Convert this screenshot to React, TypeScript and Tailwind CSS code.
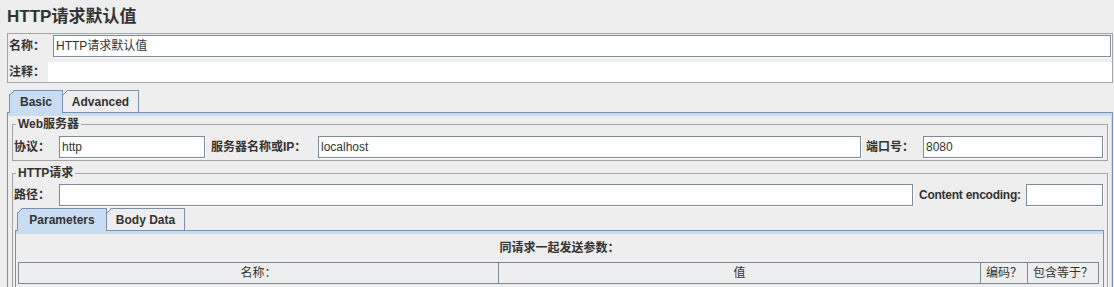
import type { ReactNode } from "react";

const FONT = "font-['Liberation_Sans','Noto_Sans_CJK_SC',sans-serif]";

function Field({ value, className = "" }: { value?: string; className?: string }) {
  return (
    <div
      className={`flex h-[22px] items-center border border-[#7a8a99] bg-white px-[2px] text-[12px] text-[#333] shadow-[1px_1px_0_#ffffff] ${className}`}
    >
      {value}
    </div>
  );
}

function Label({ children, className = "" }: { children: ReactNode; className?: string }) {
  return <div className={`shrink-0 whitespace-nowrap text-[12px] font-bold ${className}`}>{children}</div>;
}

// metal-style tab, clipped top-left corner with a drawn diagonal
function Tab({ label, selected, className = "" }: { label: string; selected?: boolean; className?: string }) {
  return (
    <div
      className={`relative flex h-[22px] items-center justify-center border-l border-t border-r border-[#7a8fb8] text-[12px] font-bold [clip-path:polygon(5px_0,100%_0,100%_100%,0_100%,0_5px)] ${
        selected ? "z-10 -mb-px h-[23px] bg-[#c8ddf2]" : "bg-[#eeeeee]"
      } ${className}`}
    >
      <svg className="absolute -left-px -top-px h-[6px] w-[6px]" viewBox="0 0 6 6">
        <line x1="0.5" y1="5.5" x2="5.5" y2="0.5" stroke="#7a8fb8" strokeWidth="1" />
      </svg>
      {label}
    </div>
  );
}

function Group({ title, children, className = "" }: { title: string; children: ReactNode; className?: string }) {
  return (
    <fieldset className={`mx-[4px] border border-[#a5a5a5] ${className}`}>
      <legend className="ml-[3px] px-[2px] text-[12px] font-bold leading-[14px]">{title}</legend>
      {children}
    </fieldset>
  );
}

export default function App() {
  return (
    <div className={`h-[287px] w-[1114px] overflow-hidden bg-[#eeeeee] text-[#333] ${FONT}`}>
      <div className="h-[33px] pl-[7px] pt-[7px] text-[17px] font-bold leading-[20px]">HTTP请求默认值</div>

      <div className="ml-[7px] h-[50px] w-[1106px] border border-[#a5a5a5]">
        <div className="mt-[1px] flex h-[22px] items-center">
          <Label className="w-[45px] pl-[1px]">名称：</Label>
          <Field value="HTTP请求默认值" className="mr-[1px] flex-1" />
        </div>
        <div className="mt-[5px] flex h-[20px] items-center">
          <Label className="w-[40px] pl-[1px]">注释：</Label>
          <div className="h-[20px] flex-1 bg-white" />
        </div>
      </div>

      <div className="mt-[7px] flex items-end pl-[9px]">
        <Tab label="Basic" selected className="w-[54px]" />
        <Tab label="Advanced" className="-ml-px w-[77px]" />
      </div>

      <div className="ml-[7px] h-[200px] w-[1106px] border border-[#7a8fb8] shadow-[inset_-1px_0_0_#c8ddf2]">
        <div className="h-[3px] bg-[#c8ddf2]" />

        <Group title="Web服务器" className="mt-[1px]">
          <div className="mb-[2px] mt-[5px] flex h-[22px] items-center">
            <Label className="w-[46px] pl-[1px]">协议：</Label>
            <Field value="http" className="w-[146px]" />
            <Label className="w-[113px] pl-[6px]">服务器名称或IP：</Label>
            <Field value="localhost" className="w-[543px]" />
            <Label className="w-[62px] pl-[5px]">端口号：</Label>
            <Field value="8080" className="w-[180px]" />
          </div>
        </Group>

        <Group title="HTTP请求" className="mt-[5px] h-[140px]">
          <div className="mt-[4px] flex h-[22px] items-center">
            <Label className="w-[46px] pl-[1px]">路径：</Label>
            <Field className="w-[854px]" />
            <Label className="w-[113px] pl-[6px] tracking-[-0.25px]">Content encoding:</Label>
            <Field className="w-[77px]" />
          </div>

          <div className="mt-[2px] flex items-end pl-[4px]">
            <Tab label="Parameters" selected className="w-[90px]" />
            <Tab label="Body Data" className="-ml-px w-[79px]" />
          </div>

          <div className="ml-[2px] mr-[3px] h-[80px] border border-[#7a8fb8]">
            <div className="h-[3px] bg-[#c8ddf2]" />
            <div className="flex h-[28px] items-center justify-center text-[12px] font-bold">同请求一起发送参数：</div>
            <div className="ml-[2px] mr-[4px] flex h-[22px] border border-[#7a8a99] text-[12px]">
              <div className="flex w-[480px] items-center justify-center border-r border-[#7a8a99]">名称：</div>
              <div className="flex w-[482px] items-center justify-center border-r border-[#7a8a99]">值</div>
              <div className="flex w-[47px] items-center justify-center border-r border-[#7a8a99]">编码？</div>
              <div className="flex flex-1 items-center justify-center">包含等于？</div>
            </div>
          </div>
        </Group>
      </div>
    </div>
  );
}
